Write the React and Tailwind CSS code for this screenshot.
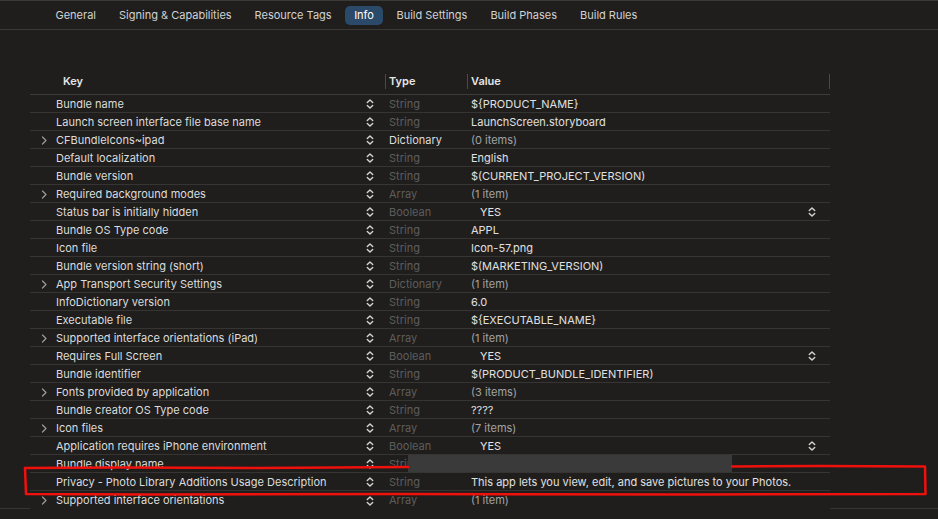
import React from "react";

const tabs = [
  "General",
  "Signing & Capabilities",
  "Resource Tags",
  "Info",
  "Build Settings",
  "Build Phases",
  "Build Rules",
];

const rows = [
  { key: "Bundle name", type: "String", value: "${PRODUCT_NAME}" },
  { key: "Launch screen interface file base name", type: "String", value: "LaunchScreen.storyboard" },
  { key: "CFBundleIcons~ipad", type: "Dictionary", bright: true, value: "(0 items)", expand: true, muted: true },
  { key: "Default localization", type: "String", value: "English" },
  { key: "Bundle version", type: "String", value: "$(CURRENT_PROJECT_VERSION)" },
  { key: "Required background modes", type: "Array", value: "(1 item)", expand: true, muted: true },
  { key: "Status bar is initially hidden", type: "Boolean", value: "YES", bool: true },
  { key: "Bundle OS Type code", type: "String", value: "APPL" },
  { key: "Icon file", type: "String", value: "Icon-57.png" },
  { key: "Bundle version string (short)", type: "String", value: "$(MARKETING_VERSION)" },
  { key: "App Transport Security Settings", type: "Dictionary", value: "(1 item)", expand: true, muted: true },
  { key: "InfoDictionary version", type: "String", value: "6.0" },
  { key: "Executable file", type: "String", value: "${EXECUTABLE_NAME}" },
  { key: "Supported interface orientations (iPad)", type: "Array", value: "(1 item)", expand: true, muted: true },
  { key: "Requires Full Screen", type: "Boolean", value: "YES", bool: true },
  { key: "Bundle identifier", type: "String", value: "$(PRODUCT_BUNDLE_IDENTIFIER)" },
  { key: "Fonts provided by application", type: "Array", value: "(3 items)", expand: true, muted: true },
  { key: "Bundle creator OS Type code", type: "String", value: "????" },
  { key: "Icon files", type: "Array", value: "(7 items)", expand: true, muted: true },
  { key: "Application requires iPhone environment", type: "Boolean", value: "YES", bool: true },
  { key: "Bundle display name", type: "String", value: "" },
  {
    key: "Privacy - Photo Library Additions Usage Description",
    type: "String",
    value: "This app lets you view, edit, and save pictures to your Photos.",
  },
  { key: "Supported interface orientations", type: "Array", value: "(1 item)", expand: true, muted: true, last: true },
];

const Stepper = () => (
  <svg width="8" height="12" viewBox="0 0 8 12" fill="none" stroke="#d4d4d4" strokeWidth="1.4" strokeLinecap="round" strokeLinejoin="round">
    <path d="M1.3 4.6 L4 2 L6.7 4.6" />
    <path d="M1.3 7.4 L4 10 L6.7 7.4" />
  </svg>
);

const Chevron = () => (
  <svg width="6" height="9" viewBox="0 0 6 9" fill="none" stroke="#9c9c9c" strokeWidth="1.2" strokeLinecap="round" strokeLinejoin="round">
    <path d="M1.5 1 L5 4.5 L1.5 8" />
  </svg>
);

const Row = ({ row }) => (
  <div className={`flex h-[18px] items-center pt-[1px] ${row.last ? "" : "border-b border-[#363534]"}`}>
    <div className="flex w-[355px] shrink-0 items-center pr-[11px]">
      <div className="flex w-[26px] shrink-0 justify-center pl-[2px]">{row.expand && <Chevron />}</div>
      <span className="flex-1 truncate text-[#dcdcdc]">{row.key}</span>
      <Stepper />
    </div>
    <div className={`w-[82px] shrink-0 pl-[4px] whitespace-nowrap ${row.bright ? "text-[#dcdcdc]" : "text-[#5e5d5c]"}`}>
      {row.type}
    </div>
    <div className="flex min-w-0 flex-1 items-center pl-[4px] pr-[14px]">
      {row.bool ? (
        <>
          <span className="pl-[9px] text-[#e4e4e4]">YES</span>
          <div className="ml-auto flex">
            <Stepper />
          </div>
        </>
      ) : (
        <span className={`whitespace-nowrap ${row.muted ? "text-[#a3a3a3]" : "text-[#e0e0e0]"}`}>{row.value}</span>
      )}
    </div>
  </div>
);

export default function App() {
  return (
    <div
      className="relative flex h-[519px] w-[938px] flex-col overflow-hidden bg-[#1f1e1d] text-[11px]"
      style={{ fontFamily: 'Inter, "Liberation Sans", Arial, sans-serif' }}
    >
      <div className="flex h-[30px] shrink-0 items-center border-y border-[#3a3938] pl-[44px]">
        {tabs.map((t) => (
          <div
            key={t}
            className={`flex h-[19px] items-center rounded-[5px] text-[11px] ${
              t === "Info" ? "mx-[2px] bg-[#2b4968] px-[9px] text-white" : "px-[11.5px] text-[#d2d2d2]"
            }`}
          >
            {t}
          </div>
        ))}
      </div>

      <div className="flex flex-1">
        <div className="flex w-[30px] shrink-0 flex-col justify-end">
          <div className="h-[11px] border-t border-[#363534]" />
        </div>

        <div className="flex w-[800px] shrink-0 flex-col pt-[42px]">
          <div className="flex h-[23px] items-center border-b border-[#3d3c3b] pb-[4px] font-semibold text-[#e6e6e6]">
            <div className="w-[355px] shrink-0 pl-[33px]">Key</div>
            <div className="h-[15px] w-[82px] shrink-0 border-l border-[#4a4948] pl-[3px] leading-[15px]">Type</div>
            <div className="h-[15px] flex-1 border-x border-[#4a4948] pl-[3px] leading-[15px]">Value</div>
          </div>
          {rows.map((r) => (
            <Row key={r.key} row={r} />
          ))}
        </div>

        <div className="flex flex-1 flex-col justify-end">
          <div className="h-[11px] border-t border-[#363534]" />
        </div>
      </div>

      {/* redaction block */}
      <div className="absolute left-[408px] top-[455px] h-[17px] w-[324px] bg-[#3a3a3a]" />

      {/* hand drawn highlight */}
      <svg className="pointer-events-none absolute left-0 top-0" width="938" height="519">
        <g fill="none" stroke="#f0100c" strokeWidth="2.5" strokeLinejoin="round" strokeLinecap="round">
          <path d="M25 468 L120 467.5 L260 468 L408 467" />
          <path d="M732 466.5 L820 466 L925 466.5 L925.5 494 L700 494.5 L400 494 L150 494.5 L26 494 L25 468" />
        </g>
      </svg>
    </div>
  );
}
